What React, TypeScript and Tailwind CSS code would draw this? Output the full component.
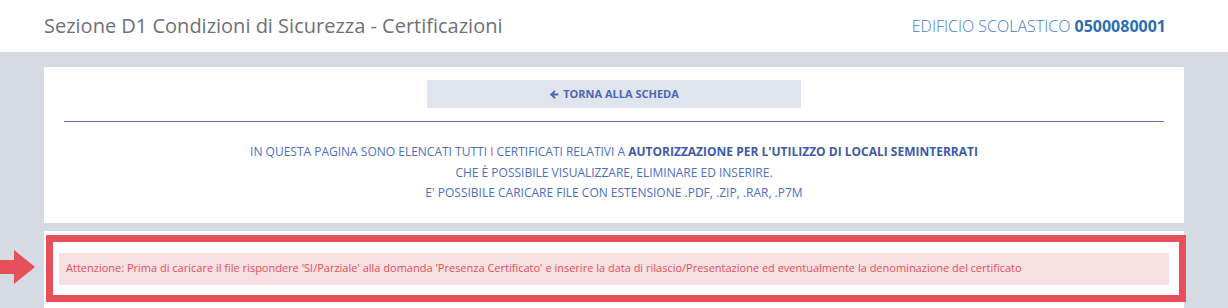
import { ArrowLeft } from 'lucide-react';

export default function App() {
  return (
    <div className="min-h-[308px] bg-[#d5dae3] pb-4" style={{ fontFamily: '"Open Sans", "Liberation Sans", sans-serif' }}>
      {/* Header */}
      <div className="flex h-[52px] items-center justify-between bg-white pl-[44px] pr-[62px]">
        <h1 className="text-[20px] text-[#6d7176]">Sezione D1 Condizioni di Sicurezza - Certificazioni</h1>
        <div className="text-[16px] font-light text-[#4a7cc9]">
          EDIFICIO SCOLASTICO <span className="font-bold text-[#2e6eb0]">0500080001</span>
        </div>
      </div>

      {/* Info panel */}
      <div className="mx-[44px] mt-[15px] bg-white pt-[13px] pb-[19px]">
        <div className="flex justify-center">
          <button className="flex h-[28px] w-[374px] items-center justify-center gap-[3px] bg-[#e0e4ed] text-[11px] font-bold text-[#4a67b3]">
            <ArrowLeft className="h-[11px] w-[11px]" strokeWidth={4} />
            TORNA ALLA SCHEDA
          </button>
        </div>
        <div className="mx-[20px] mt-[13px] h-px bg-[#5a72b1]" />
        <div className="mt-[20px] text-center text-[12px] leading-[20.5px] text-[#4d6fbf]">
          <p>
            IN QUESTA PAGINA SONO ELENCATI TUTTI <span className="text-[#e0505a]">I</span> CERTIFICATI RELATIVI A{' '}
            <span className="font-bold text-[#3f5aa6]">AUTORIZZAZIONE PER L'UTILIZZO DI LOCALI SEMINTERRATI</span>
          </p>
          <p>CHE È POSSIBILE VISUALIZZARE, ELIMINARE ED INSERIRE.</p>
          <p>E' POSSIBILE CARICARE FILE CON ESTENSIONE .PDF, .ZIP, .RAR, .P7M</p>
        </div>
      </div>

      {/* Warning panel */}
      <div className="relative mx-[44px] mt-[8px] bg-white pt-[4px] pb-[8px]">
        <svg className="absolute left-[-44px] top-[19px]" width="36" height="35" viewBox="0 0 36 35">
          <path d="M0 10 H14 V0 L35 17 L14 34 V24 H0 Z" fill="#e5505a" />
        </svg>
        <div className="ml-[2px] mr-[-2px] border-[7px] border-[#e5505a] pt-[11px] pb-[10px] pl-[6px] pr-[10px]">
          <div className="flex h-[32px] items-center bg-[#f8dfe2] px-[7px] text-[11px] text-[#e0505a]">
            Attenzione: Prima di caricare il file rispondere 'SI/Parziale' alla domanda 'Presenza Certificato' e inserire la data di rilascio/Presentazione ed eventualmente la denominazione del certificato
          </div>
        </div>
      </div>
    </div>
  );
}
